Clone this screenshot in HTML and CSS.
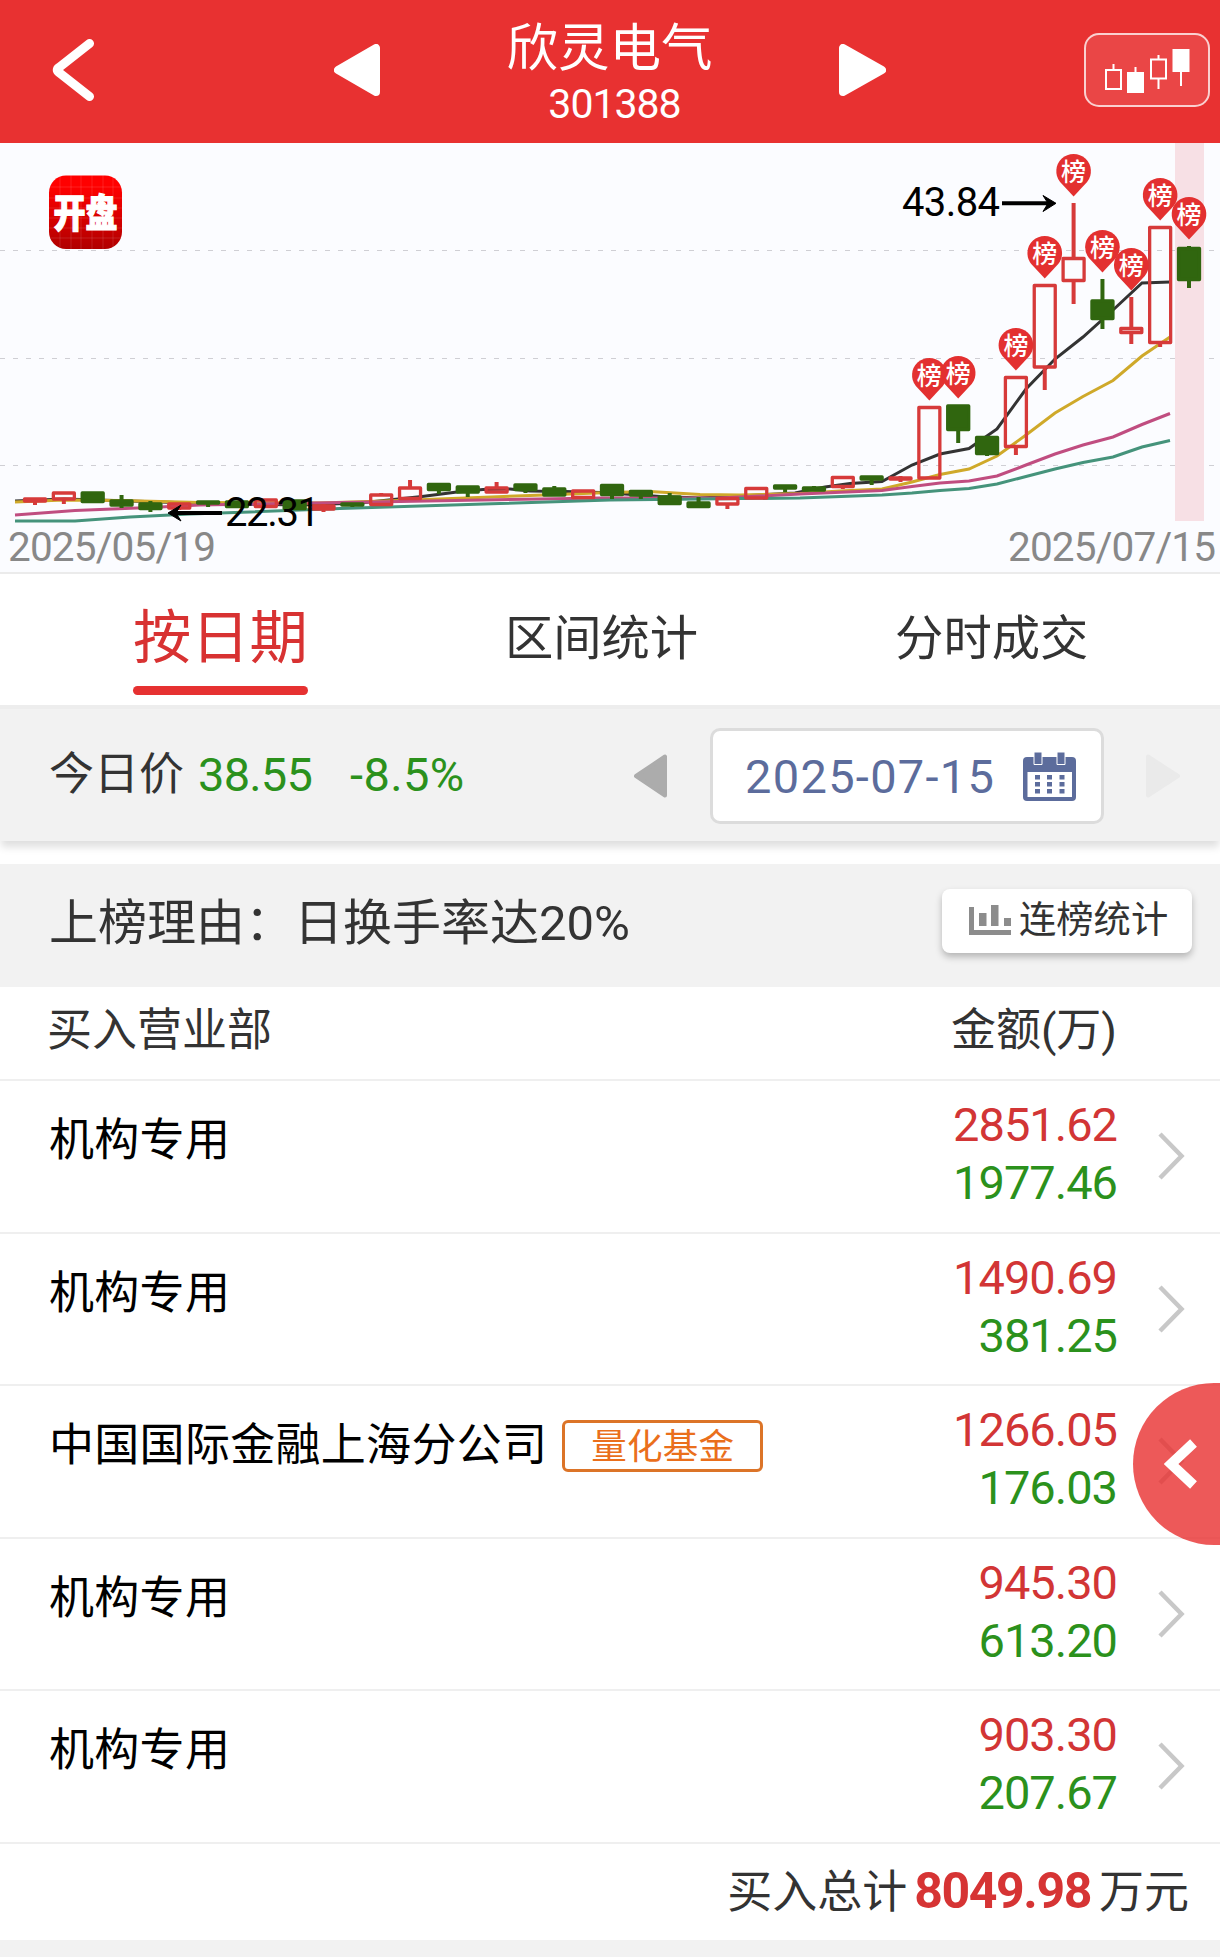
FILE: index.html
```html
<!DOCTYPE html>
<html lang="zh-CN">
<head>
    <meta charset="UTF-8">
    <meta name="viewport" content="width=device-width, initial-scale=1.0">
    <title>欣灵电气 301388</title>
    <link rel="stylesheet" href="styles.css">
</head>
<body>
    <!-- Header -->
    <header class="header">
        <svg class="back" width="42" height="62" viewBox="0 0 42 62">
            <path d="M37.500 4.500L7 28.500q-3.500 2.500 0 5L37.500 57.500" fill="none" stroke="#fff" stroke-width="9" stroke-linecap="round" stroke-linejoin="round"/>
        </svg>
        <svg width="46" height="52" viewBox="0 0 46 52">
            <path d="M4 26L42 4V48Z" fill="#fff" stroke="#fff" stroke-width="8" stroke-linejoin="round"/>
        </svg>
        <div class="stock">
            <h1>欣灵电气</h1>
            <div class="code">301388</div>
        </div>
        <svg width="47" height="52" viewBox="0 0 47 52">
            <path d="M43 26L4 4V48Z" fill="#fff" stroke="#fff" stroke-width="8" stroke-linejoin="round"/>
        </svg>
        <div class="kline-btn">
            <svg width="86" height="46" viewBox="0 0 86 46" fill="none" stroke="#fff" stroke-width="2">
                <path d="M2 21H17V40H2ZM9.500 15V21M47 10.500H62V29.500H47ZM54.500 6V10.500M54.500 29.500V40M31.500 18V24M77 20V37"/>
                <path d="M23 23H40V44H23ZM68.500 0H85.500V23H68.500Z" fill="#fff" stroke="none"/>
            </svg>
        </div>
    </header>

    <!-- K-line chart -->
    <section class="chart">
        <svg id="kline" width="1220" height="429" viewBox="0 0 1220 429">
            <defs>
                <linearGradient id="logoBg" x1="0" y1="0" x2="0" y2="1">
                    <stop offset="0.15" stop-color="#ff0000"/>
                    <stop offset="1" stop-color="#b00000"/>
                </linearGradient>
            </defs>
            <g class="grid">
                <path d="M0 107.500H1220M0 215.500H1220M0 322.500H1220"/>
            </g>
            <rect class="today" x="1175" y="0" width="29" height="378"/>
            <rect x="49" y="32.500" width="73" height="73.500" rx="17" fill="url(#logoBg)"/>
            <path class="logo-grid" d="M60 32V106M71 32V106M81 32V106M92 32V106M103 32V106M113 32V106M49 44H122M49 55H122M49 65H122M49 75H122M49 85H122M49 95H122"/>
            <text class="logo-text" transform="translate(85.500 84) scale(1 1.2)" text-anchor="middle">开盘</text>
            <g class="ma">
                <polyline stroke="#333" points="15,358 64,356 130,358 190,360 300,362 360,360 422,353.500 457,349 483,346.500 510,346 530,348 565,348.500 600,349.500 625,351 660,353.500 700,355 795,350 825,344 850,340.500 882,338.500 912,322 940,311 969,305.500 997,286 1026,246 1055,216 1083,194 1113,167 1142,140 1170,139"/>
                <polyline stroke="#cfa92a" points="15,359 64,357 121,357.500 200,359.500 320,360 400,357.500 478,354.500 530,352.500 570,351 610,349.500 650,348.500 700,351.500 740,352 800,350.500 840,348 882,346 912,339 940,331.500 969,326 997,313 1026,292 1055,270 1083,253.500 1113,237.500 1142,213 1170,194"/>
                <polyline stroke="#c04d80" points="15,372 75,367.500 150,364.500 200,362 400,358.500 540,356 600,355 720,355 800,351 882,347.500 912,343.500 940,340 969,338 997,333 1026,322 1055,311 1083,302 1113,294 1142,281.500 1170,270.500"/>
                <polyline stroke="#45937b" points="15,378 75,378 130,374 190,371 250,369 340,365.500 420,363 500,360.500 610,357 700,356 800,355 882,352 912,350 940,347.500 969,345.500 997,341 1026,333.500 1055,326 1083,319.500 1113,314 1142,304 1170,297.500"/>
            </g>
            <g id="candles"></g>
            <!-- high / low labels -->
            <g class="extreme">
                <text x="902" y="73" textLength="98">43.84</text>
                <path d="M1002 60.300H1051"/>
                <path class="head" d="M1056 60.300L1043 52.500L1048 60.300L1043 68.500Z"/>
                <text x="225" y="383" textLength="95">22.31</text>
                <path d="M173 370H222"/>
                <path class="head" d="M168 370L181 362L176 370L181 378Z"/>
            </g>
            <text class="date-label" x="8" y="417.500" textLength="208">2025/05/19</text>
            <text class="date-label" x="1008" y="417.500" textLength="208">2025/07/15</text>
        </svg>
    </section>

    <!-- Tabs -->
    <nav class="tabs">
        <div class="tab active">按日期</div>
        <div class="tab">区间统计</div>
        <div class="tab">分时成交</div>
    </nav>

    <!-- Price and date -->
    <section class="price-bar">
        <div class="price">
            <span>今日价</span>
            <span class="green now">38.55</span>
            <span class="green change">-8.5%</span>
        </div>
        <svg class="arrow" width="33" height="44" viewBox="0 0 33 44">
            <path d="M2 22L31 2.500V41.500Z" fill="#acacac" stroke="#acacac" stroke-width="4" stroke-linejoin="round"/>
        </svg>
        <div class="date-box">
            <span>2025-07-15</span>
            <svg width="53" height="49" viewBox="0 0 53 49">
                <path d="M4 5H49Q53 5 53 9V45Q53 49 49 49H4Q0 49 0 45V9Q0 5 4 5Z" fill="#5c6c9c"/>
                <path d="M4.500 20H49V45H4.500Z" fill="#fff"/>
                <path d="M11 0H19V12.500H11ZM34 0H42V12.500H34Z" fill="#5c6c9c" stroke="#fff"/>
                <path d="M14.500 23V42M26.500 23V42M39 23V42" stroke="#5c6c9c" stroke-width="5" stroke-dasharray="4.500 2.500"/>
            </svg>
        </div>
        <svg class="arrow" width="34" height="44" viewBox="0 0 34 44">
            <path d="M32 22L2 2.500V41.500Z" fill="#eaeaea" stroke="#eaeaea" stroke-width="4" stroke-linejoin="round"/>
        </svg>
    </section>

    <!-- Reason -->
    <section class="reason">
        <div class="reason-text">上榜理由：日换手率达20%</div>
        <div class="stat-btn">
            <svg width="42" height="30" viewBox="0 0 42 30" fill="#8c8c8c">
                <path d="M0 2H5V25H42V30H0ZM10 8H17.500V21H10ZM22 0H29.500V21H22ZM35 13H42V21H35Z"/>
            </svg>
            <span>连榜统计</span>
        </div>
    </section>

    <!-- Buyers -->
    <section class="list">
        <div class="list-head">
            <div class="name">买入营业部</div>
            <div>金额(万)</div>
        </div>
        <div class="row">
            <div class="name">机构专用</div>
            <div class="amount"><div class="red">2851.62</div><div class="green">1977.46</div></div>
            <svg class="more" viewBox="0 0 27 48"><path d="M2 2L23.500 24L2 46"/></svg>
        </div>
        <div class="row">
            <div class="name">机构专用</div>
            <div class="amount"><div class="red">1490.69</div><div class="green">381.25</div></div>
            <svg class="more" viewBox="0 0 27 48"><path d="M2 2L23.500 24L2 46"/></svg>
        </div>
        <div class="row">
            <div class="name">中国国际金融上海分公司<span class="tag">量化基金</span></div>
            <div class="amount"><div class="red">1266.05</div><div class="green">176.03</div></div>
            <svg class="more" viewBox="0 0 27 48"><path d="M2 2L23.500 24L2 46"/></svg>
        </div>
        <div class="row">
            <div class="name">机构专用</div>
            <div class="amount"><div class="red">945.30</div><div class="green">613.20</div></div>
            <svg class="more" viewBox="0 0 27 48"><path d="M2 2L23.500 24L2 46"/></svg>
        </div>
        <div class="row">
            <div class="name">机构专用</div>
            <div class="amount"><div class="red">903.30</div><div class="green">207.67</div></div>
            <svg class="more" viewBox="0 0 27 48"><path d="M2 2L23.500 24L2 46"/></svg>
        </div>
        <div class="total">买入总计<b>8049.98</b>万元</div>
    </section>

    <!-- Floating drawer handle -->
    <div class="drawer">
        <svg width="34" height="50" viewBox="0 0 34 50">
            <path d="M29.500 4L7 25L29.500 46" fill="none" stroke="#fff" stroke-width="10"/>
        </svg>
    </div>

    <script>
        // [color, body top, body bottom, high, low, on the list]
        const candles = [
            ['r', 356, 358, 356, 362], ['r', 350, 356, 350, 361], ['g', 350, 358.5, 349, 359],
            ['g', 358, 362, 352, 365], ['g', 361, 365.5, 358, 369], ['r', 361, 365, 360, 367],
            ['g', 359, 360, 358, 364], ['g', 359, 363.5, 358, 365], ['r', 357, 363.5, 356, 365],
            ['g', 358, 365.5, 357, 367], ['r', 363, 366, 361, 369], ['g', 361, 362, 360, 364],
            ['r', 352, 361.5, 350, 363], ['r', 345, 355.5, 337, 356], ['g', 341.5, 346.5, 341, 351],
            ['g', 344, 349, 343, 354], ['r', 345, 349, 339, 350], ['g', 342, 346.5, 341, 350],
            ['g', 346, 352, 343, 353], ['r', 348, 354.5, 347, 355], ['g', 342.5, 351.5, 341, 356],
            ['g', 348.5, 352, 347, 356], ['g', 354, 360.5, 350, 361], ['g', 360, 363.5, 354, 365],
            ['r', 355.5, 361, 354, 366], ['r', 345.5, 355, 344, 356], ['g', 343, 345, 342, 349],
            ['g', 345, 347, 343, 348], ['r', 334.5, 343.5, 333, 346], ['g', 334, 336, 333, 342],
            ['r', 335, 336, 333, 339], ['r', 264.5, 335, 264, 335, 1], ['g', 263, 286.5, 262, 300, 1],
            ['g', 294.5, 310.5, 293, 313], ['r', 234.5, 303.5, 234, 312, 1], ['r', 142.5, 224, 142, 247, 1],
            ['r', 115.5, 137.5, 60, 161, 1], ['g', 158, 175.5, 136, 186, 1], ['r', 185.5, 189.5, 154, 201, 1],
            ['r', 84.5, 199.5, 84, 204, 1], ['g', 105.5, 136.5, 103, 145, 1]
        ];

        let html = '';
        let pins = '';
        candles.forEach(([color, top, bottom, high, low, listed], i) => {
            const x = 35 + 28.85 * i;
            html += `
                <g class="candle ${color}">
                    <path d="M${x} ${high}V${top}M${x} ${bottom}V${low}"/>
                    <rect x="${x - 10.5}" y="${top}" width="21" height="${bottom - top}"/>
                </g>
            `;
            if (listed) {
                const y = high - 32;
                pins += `
                    <path class="pin" d="M${x - 13.5} ${y + 11}A17.300 17.300 0 1 1 ${x + 13.5} ${y + 11}L${x} ${y + 25.5}Z"/>
                    <text class="pin-text" x="${x}" y="${y + 9.5}" text-anchor="middle">榜</text>
                `;
            }
        });
        document.getElementById('candles').innerHTML = html + pins;
    </script>
</body>
</html>
```
FILE: styles.css
```css
* {
    box-sizing: border-box;
}
body {
    margin: 0;
    width: 1220px;
    height: 1957px;
    position: relative;
    overflow: hidden;
    font-family: Roboto, "Noto Sans CJK SC", sans-serif;
    font-size: 45px;
    color: #333;
    background: #f2f2f2;
}
svg {
    display: block;
    flex-shrink: 0;
}
.red {
    color: #d23535;
}
.green {
    color: #2b911c;
}

/* header */
.header {
    display: grid;
    grid-template-columns: 334px 46px 459px 47px 334px;
    align-items: center;
    height: 143px;
    padding-bottom: 3px;
    background: #e83131;
    color: white;
}
.back {
    margin-left: 52px;
}
.stock {
    text-align: center;
    padding-top: 8px;
}
.stock h1 {
    margin: 0;
    font-size: 51.5px;
    font-weight: normal;
    line-height: 60px;
}
.code {
    padding-left: 10px;
    font-size: 41px;
    line-height: 50px;
    letter-spacing: -1px;
}
.kline-btn {
    width: 126px;
    height: 74px;
    margin-left: 198px;
    padding: 14px 18px;
    border: 2px solid rgba(255,255,255,0.75);
    border-radius: 15px;
    background: rgba(255,255,255,0.1);
}

/* chart */
.chart {
    height: 431px;
    background: #fbfcff;
    border-bottom: 2px solid #ebebeb;
}
.grid path {
    stroke: #cfcfd4;
    stroke-dasharray: 5 8;
}
.today {
    fill: #f7e0e5;
}
.logo-grid {
    stroke: rgba(255,255,255,0.12);
}
.logo-text {
    font-size: 32px;
    font-weight: 900;
    fill: white;
    stroke: white;
}
.ma polyline {
    fill: none;
    stroke-width: 3;
}
.candle {
    stroke-width: 3.3;
    stroke-linejoin: round;
}
.candle path {
    stroke-width: 4;
}
.candle.r {
    fill: none;
    stroke: #d63a3a;
}
.candle.g {
    fill: #30660f;
    stroke: #30660f;
}
.pin {
    fill: #e33030;
}
.pin-text {
    font-size: 25px;
    font-weight: 500;
    fill: white;
}
.extreme {
    font-size: 40px;
    fill: black;
}
.extreme path {
    stroke: black;
    stroke-width: 4;
}
.extreme .head {
    stroke-width: 1;
}
.date-label {
    font-size: 40.5px;
    fill: #888;
}

/* tabs */
.tabs {
    display: flex;
    gap: 197px;
    height: 131px;
    padding: 16px 0 0 133px;
    background: white;
}
.tab {
    font-size: 48.3px;
    line-height: 98px;
}
.tab.active {
    font-size: 58.3px;
    line-height: 96px;
    color: #d83232;
}
.tab.active::after {
    content: "";
    display: block;
    height: 9px;
    border-radius: 5px;
    background: #e63131;
}

/* price bar */
.price-bar {
    display: flex;
    align-items: center;
    position: relative;
    height: 136px;
    padding-left: 49px;
    border-top: 4px solid #ededed;
    background: #f2f2f2;
    box-shadow: 0 7px 8px -1px rgba(0,0,0,0.13);
}
.price {
    display: flex;
    width: 585px;
    line-height: 60px;
}
.price .now {
    width: 152px;
    margin-left: 14px;
}
.price .green {
    font-size: 47px;
    letter-spacing: -0.8px;
}
.price .change {
    letter-spacing: 0.4px;
}
.arrow {
    margin-top: 2px;
}
.date-box {
    display: flex;
    align-items: center;
    justify-content: space-between;
    width: 394px;
    height: 96px;
    margin: 2px 42px 0 43px;
    padding: 0 25px 0 32px;
    border: 3px solid #dcdcdc;
    border-radius: 10px;
    background: white;
    font-size: 47px;
    letter-spacing: 1.3px;
    color: #5c6c9c;
}

/* reason */
.reason {
    display: flex;
    align-items: center;
    justify-content: space-between;
    height: 146px;
    padding: 0 28px 0 49px;
    border-top: 23px solid white;
    font-size: 49px;
}
.reason-text {
    padding-bottom: 3px;
    line-height: 60px;
}
.stat-btn {
    display: flex;
    align-items: center;
    gap: 8px;
    width: 250px;
    height: 64px;
    margin-bottom: 9px;
    padding: 0 0 3px 27px;
    border-radius: 8px;
    background: white;
    font-size: 37.3px;
    line-height: 48px;
    box-shadow: 0 4px 7px rgba(0,0,0,0.25);
}

/* list */
.list {
    background: white;
}
.list-head {
    display: flex;
    align-items: center;
    height: 94px;
    padding: 0 103px 4px 47px;
    border-bottom: 2px solid #efefef;
    line-height: 58px;
}
.name {
    flex: 1;
}
.row {
    display: flex;
    height: 152.5px;
    padding: 15px 35px 0 49px;
    border-bottom: 2px solid #efefef;
}
.row .name {
    display: flex;
    align-items: center;
    height: 58px;
    margin-top: 16px;
    line-height: 58px;
    letter-spacing: 0.3px;
    color: black;
}
.tag {
    width: 201px;
    height: 52px;
    margin-left: 15px;
    border: 3px solid #dc7428;
    border-radius: 6px;
    font-size: 35.5px;
    line-height: 48px;
    text-align: center;
    color: #ea6f1c;
}
.amount {
    font-size: 47px;
    line-height: 58px;
    letter-spacing: -1px;
    text-align: right;
}
.more {
    width: 27px;
    height: 48px;
    margin: 36px 0 0 41px;
    fill: none;
    stroke: #c8c8c8;
    stroke-width: 4.5;
}
.total {
    height: 96.5px;
    padding-right: 31px;
    line-height: 97px;
    text-align: right;
}
.total b {
    margin: 0 8px 0 7px;
    font-size: 50px;
    letter-spacing: -1.4px;
    line-height: 1;
    color: #d63434;
}

/* floating handle over the list */
.drawer {
    position: absolute;
    top: 1383px;
    right: 0;
    display: flex;
    align-items: center;
    width: 87px;
    height: 162px;
    padding-left: 31px;
    border-radius: 81px 0 0 81px;
    background: rgba(232,48,48,0.8);
}
```
